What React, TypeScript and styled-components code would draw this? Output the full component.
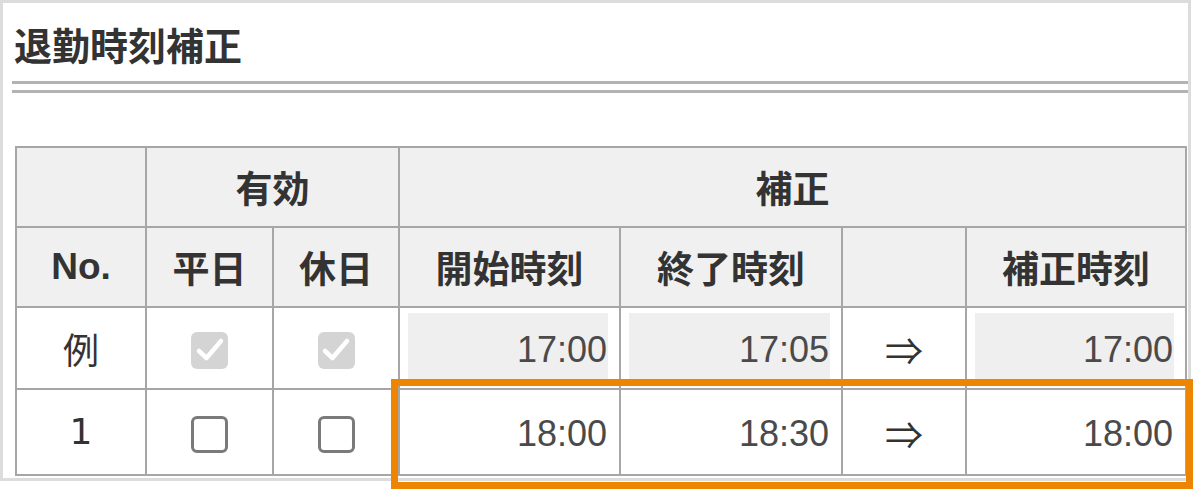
import React from 'react';
import styled, { createGlobalStyle } from 'styled-components';

const GlobalStyle = createGlobalStyle`
  html, body {
    margin: 0;
    padding: 0;
    background: #ffffff;
  }
  body {
    font-family: "Liberation Sans", "Noto Sans CJK JP", sans-serif;
    color: #333333;
  }
`;

const Page = styled.div`
  position: relative;
  width: 1193px;
  height: 499px;
`;

const Panel = styled.section`
  box-sizing: border-box;
  width: 1191px;
  height: 481px;
  border: 3px solid #dcdcdc;
  padding: 0 0 0 9px;
`;

const Title = styled.h2`
  margin: 0;
  padding: 18px 0 0 2px;
  height: 60px;
  font-size: 38px;
  line-height: 46px;
  font-weight: 700;
  color: #333333;
  font-family: "Noto Sans CJK JP", sans-serif;
`;

const DoubleRule = styled.div`
  box-sizing: border-box;
  height: 12px;
  border-top: 3px solid #b3b3b3;
  border-bottom: 3px solid #b3b3b3;
`;

const Table = styled.table`
  margin: 53px 0 0 3px;
  border-collapse: collapse;
  table-layout: fixed;
  width: 1170px;
`;

const Head = styled.th`
  background: #f0f0f0;
  border: 2px solid #a6a6a6;
  height: 78px;
  padding: 0;
  font-size: 37px;
  font-weight: 700;
  color: #333333;
  text-align: center;
  vertical-align: middle;
`;

const Cell = styled.td<{ $tall?: boolean }>`
  border: 2px solid #a6a6a6;
  height: ${(p) => (p.$tall ? 84 : 80)}px;
  padding: 0;
  text-align: center;
  vertical-align: middle;
  font-size: 36px;
  color: #333333;
`;

const Label = styled.span<{ $digit?: boolean }>`
  font-family: ${(p) => (p.$digit ? '"DejaVu Sans", sans-serif' : '"Noto Sans CJK JP", sans-serif')};
  font-size: 36px;
  color: #333333;
`;

const TimeCell = styled.td`
  border: 2px solid #a6a6a6;
  padding: 5px 11px 2px 8px;
  vertical-align: middle;
`;

const TimeBox = styled.div<{ $sample?: boolean }>`
  box-sizing: border-box;
  height: 73px;
  padding-right: 1px;
  background: ${(p) => (p.$sample ? '#efefef' : '#ffffff')};
  font-family: "Liberation Sans", sans-serif;
  font-size: 36px;
  line-height: 73px;
  color: #4a4a4a;
  text-align: right;
`;

const Arrow = styled.span`
  font-family: "Noto Sans CJK JP", sans-serif;
  font-size: 38px;
  color: #333333;
`;

const Check = styled.span<{ $disabled?: boolean }>`
  display: inline-flex;
  align-items: center;
  justify-content: center;
  box-sizing: border-box;
  width: 37px;
  height: 37px;
  border-radius: 6px;
  vertical-align: middle;
  background: ${(p) => (p.$disabled ? '#d4d4d4' : '#ffffff')};
  border: ${(p) => (p.$disabled ? 'none' : '3px solid #7a7a7a')};
`;

const Highlight = styled.div`
  position: absolute;
  left: 391px;
  top: 379px;
  width: 802px;
  height: 110px;
  box-sizing: border-box;
  border: 7px solid #ee8500;
  pointer-events: none;
`;

const Tick = () => (
  <svg width="32" height="32" viewBox="0 0 32 32">
    <path d="M5 17l7.5 7L27 7" fill="none" stroke="#ffffff" strokeWidth="4.5" strokeLinecap="round" strokeLinejoin="round" />
  </svg>
);

const rows = [
  { no: '例', sample: true, start: '17:00', end: '17:05', fixed: '17:00' },
  { no: '1', sample: false, start: '18:00', end: '18:30', fixed: '18:00' },
];

export default function App() {
  return (
    <Page>
      <GlobalStyle />
      <Panel>
        <Title>退勤時刻補正</Title>
        <DoubleRule />
        <Table>
          <colgroup>
            <col style={{ width: 130 }} />
            <col style={{ width: 127 }} />
            <col style={{ width: 126 }} />
            <col style={{ width: 221 }} />
            <col style={{ width: 222 }} />
            <col style={{ width: 124 }} />
            <col style={{ width: 220 }} />
          </colgroup>
          <thead>
            <tr>
              <Head />
              <Head colSpan={2}>有効</Head>
              <Head colSpan={4}>補正</Head>
            </tr>
            <tr>
              <Head>No.</Head>
              <Head>平日</Head>
              <Head>休日</Head>
              <Head>開始時刻</Head>
              <Head>終了時刻</Head>
              <Head />
              <Head>補正時刻</Head>
            </tr>
          </thead>
          <tbody>
            {rows.map((r) => (
              <tr key={r.no}>
                <Cell $tall={!r.sample}>
                  <Label $digit={!r.sample}>{r.no}</Label>
                </Cell>
                <Cell>
                  <Check $disabled={r.sample}>{r.sample && <Tick />}</Check>
                </Cell>
                <Cell>
                  <Check $disabled={r.sample}>{r.sample && <Tick />}</Check>
                </Cell>
                <TimeCell>
                  <TimeBox $sample={r.sample}>{r.start}</TimeBox>
                </TimeCell>
                <TimeCell>
                  <TimeBox $sample={r.sample}>{r.end}</TimeBox>
                </TimeCell>
                <Cell>
                  <Arrow>⇒</Arrow>
                </Cell>
                <TimeCell>
                  <TimeBox $sample={r.sample}>{r.fixed}</TimeBox>
                </TimeCell>
              </tr>
            ))}
          </tbody>
        </Table>
      </Panel>
      <Highlight />
    </Page>
  );
}
